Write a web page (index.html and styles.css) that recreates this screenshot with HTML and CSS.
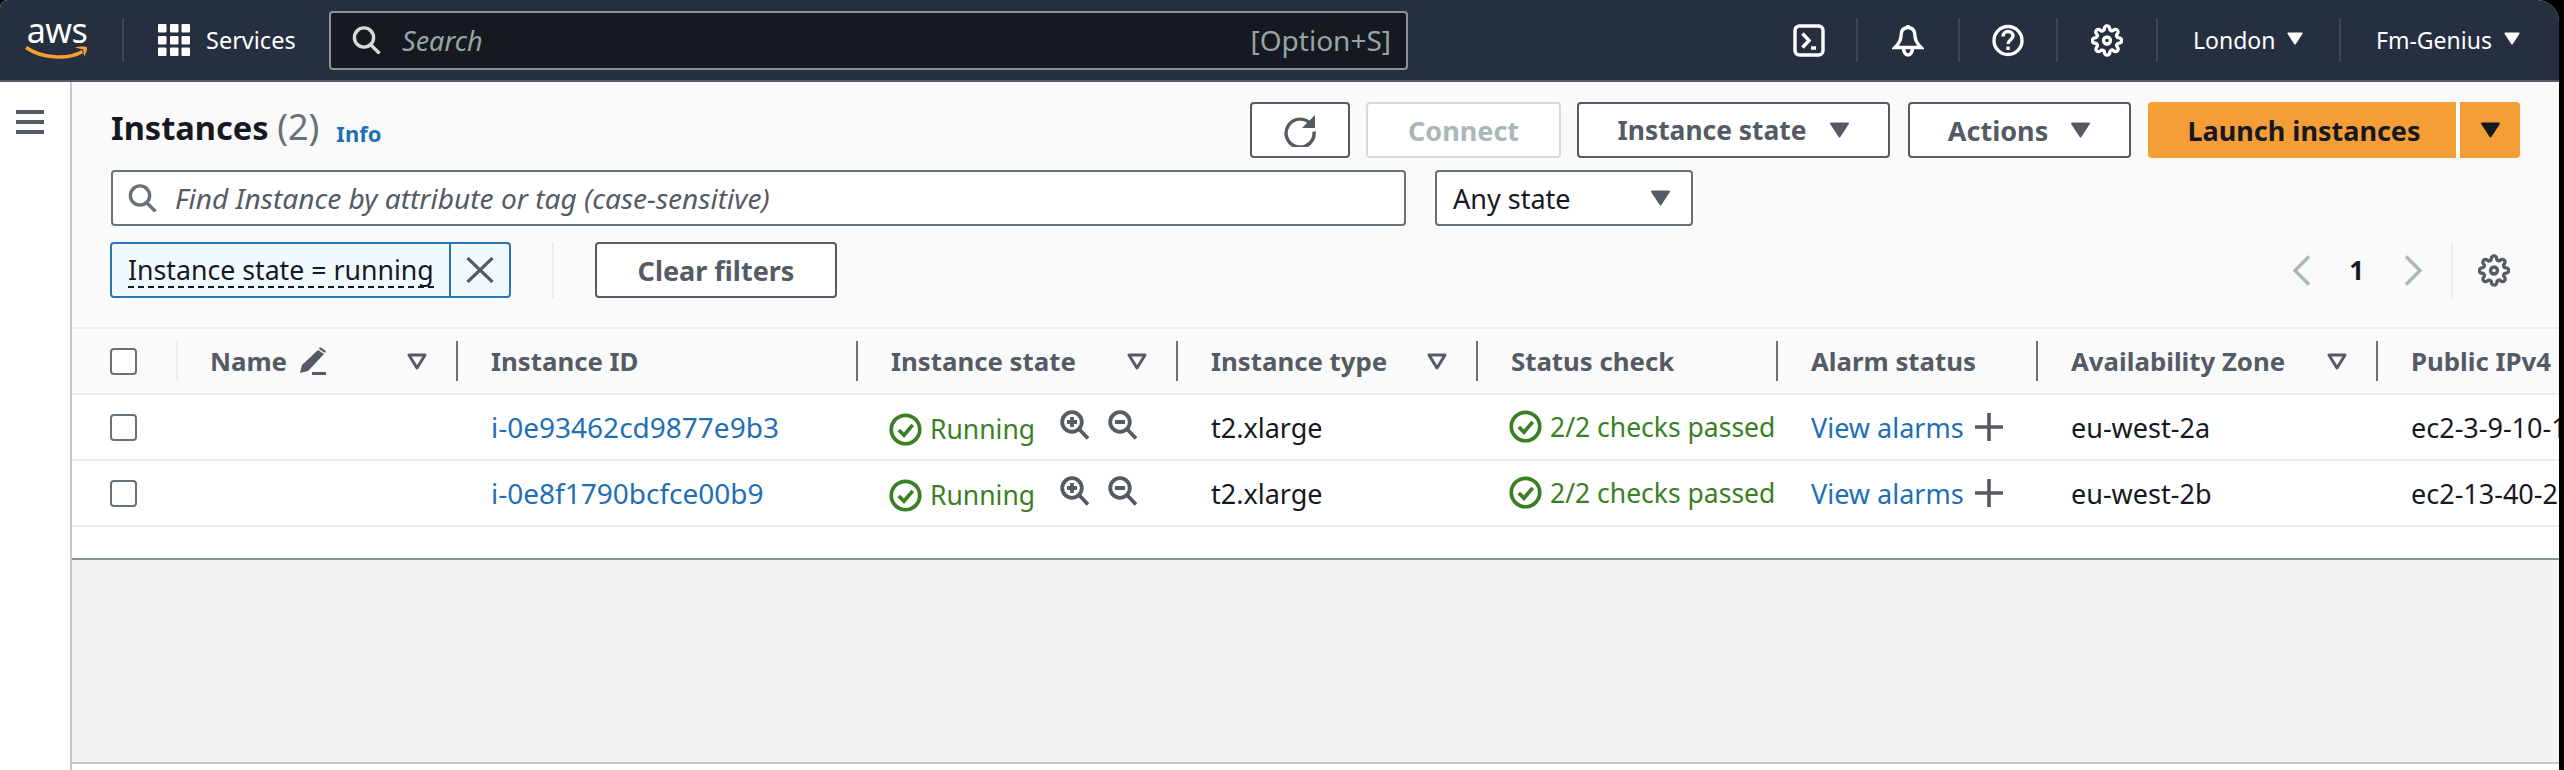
FILE: index.html
```html
<!DOCTYPE html>
<html lang="en">
<head>
<meta charset="utf-8">
<title>Instances | EC2</title>
<link rel="stylesheet" href="styles.css">
</head>
<body>
<svg class="defs" width="0" height="0" aria-hidden="true">
  <symbol id="i-gear" viewBox="0 0 24 24"><circle cx="12" cy="12" r="2.6"/><path d="M19.4 15a1.65 1.65 0 0 0 .33 1.82l.06.06a2 2 0 0 1 0 2.83 2 2 0 0 1-2.83 0l-.06-.06a1.65 1.65 0 0 0-1.82-.33 1.65 1.65 0 0 0-1 1.51V21a2 2 0 0 1-2 2 2 2 0 0 1-2-2v-.09A1.65 1.65 0 0 0 9 19.4a1.65 1.65 0 0 0-1.82.33l-.06.06a2 2 0 0 1-2.83 0 2 2 0 0 1 0-2.83l.06-.06a1.65 1.65 0 0 0 .33-1.82 1.65 1.65 0 0 0-1.51-1H3a2 2 0 0 1-2-2 2 2 0 0 1 2-2h.09A1.65 1.65 0 0 0 4.6 9a1.65 1.65 0 0 0-.33-1.82l-.06-.06a2 2 0 0 1 0-2.83 2 2 0 0 1 2.83 0l.06.06a1.65 1.65 0 0 0 1.82.33H9a1.65 1.65 0 0 0 1-1.51V3a2 2 0 0 1 2-2 2 2 0 0 1 2 2v.09a1.65 1.65 0 0 0 1 1.51 1.65 1.65 0 0 0 1.82-.33l.06-.06a2 2 0 0 1 2.83 0 2 2 0 0 1 0 2.83l-.06.06a1.65 1.65 0 0 0-.33 1.82V9a1.65 1.65 0 0 0 1.51 1H21a2 2 0 0 1 2 2 2 2 0 0 1-2 2h-.09a1.65 1.65 0 0 0-1.51 1z"/></symbol>
  <symbol id="i-caret" viewBox="0 0 20 16"><path d="M1.5 1.5h17L10 14.5z" fill="currentColor" stroke="currentColor" stroke-width="2" stroke-linejoin="round"/></symbol>
  <symbol id="i-funnel" viewBox="0 0 20 17"><path d="M2 2h16l-8 13z" fill="none" stroke="currentColor" stroke-width="3" stroke-linejoin="round"/></symbol>
  <symbol id="i-check" viewBox="0 0 32 32"><circle cx="16" cy="16" r="13.8" fill="none" stroke="currentColor" stroke-width="3.6"/><path d="M9.5 16.5l5 5 8.500-10" fill="none" stroke="currentColor" stroke-width="3.6"/></symbol>
  <symbol id="i-zoomin" viewBox="0 0 30 30"><circle cx="12" cy="12" r="9.8" fill="none" stroke="currentColor" stroke-width="3.8"/><path d="M19 19l9 9.5M12 7v10M7 12h10" fill="none" stroke="currentColor" stroke-width="3.8"/></symbol>
  <symbol id="i-zoomout" viewBox="0 0 30 30"><circle cx="12" cy="12" r="9.8" fill="none" stroke="currentColor" stroke-width="3.8"/><path d="M19 19l9 9.5M7 12h10" fill="none" stroke="currentColor" stroke-width="3.8"/></symbol>
  <symbol id="i-plus" viewBox="0 0 28 28"><path d="M14 0v28M0 14h28" fill="none" stroke="currentColor" stroke-width="3.6"/></symbol>
  <symbol id="i-search" viewBox="0 0 30 28"><circle cx="12" cy="11.5" r="9.6" fill="none" stroke="currentColor" stroke-width="3.4"/><path d="M18.5 18.5l9 9" fill="none" stroke="currentColor" stroke-width="3.4"/></symbol>
</svg>

<div class="window">
  <header class="topbar">
    <a class="logo">
      <span class="logo-word">aws</span>
      <svg class="logo-smile" width="64" height="15" viewBox="0 0 64 15"><path d="M1 2.500C16 13 42 15.500 57.500 6.500" fill="none" stroke="#f79f2f" stroke-width="3.600"/><path d="M50 2.500c4-1.200 10-1.500 11.800-.4 1 1.600-.8 6.500-2.600 9.300-.6-2.800-.6-5.300-1-7z" fill="#f79f2f"/></svg>
    </a>
    <span class="bar-divider"></span>
    <svg class="grid-icon" width="32" height="32" viewBox="0 0 32 32" fill="#fff"><rect x="0" y="0" width="8.500" height="8.500" rx="1"/><rect x="12" y="0" width="8.500" height="8.500" rx="1"/><rect x="23.500" y="0" width="8.500" height="8.500" rx="1"/><rect x="0" y="12" width="8.500" height="8.500" rx="1"/><rect x="12" y="12" width="8.500" height="8.500" rx="1"/><rect x="23.500" y="12" width="8.500" height="8.500" rx="1"/><rect x="0" y="23.500" width="8.500" height="8.500" rx="1"/><rect x="12" y="23.500" width="8.500" height="8.500" rx="1"/><rect x="23.500" y="23.500" width="8.500" height="8.500" rx="1"/></svg>
    <span class="services">Services</span>
    <div class="global-search">
      <svg class="global-search-icon" width="30" height="28"><use href="#i-search"/></svg>
      <span class="global-search-text">Search</span>
      <span class="global-search-key">[Option+S]</span>
    </div>
    <nav class="nav-right">
      <div class="nav-item nav-icon nav-shell">
        <svg width="32" height="33" viewBox="0 0 32 33" fill="none" stroke="#fff" stroke-width="3.400"><rect x="2" y="2" width="28" height="29" rx="4.500"/><path d="M9.500 9.500l6.500 7-6.500 7M18 24h5"/></svg>
      </div>
      <div class="nav-item nav-icon nav-bell">
        <svg width="32" height="33" viewBox="0 0 32 33" fill="none" stroke="#fff" stroke-width="3.400"><path d="M16 3.500c-5.500 0-7 4.500-7 8.500 0 5-2.500 8-6 11.500h26c-3.500-3.500-6-6.500-6-11.500 0-4-1.500-8.500-7-8.500zM16 1v3M11.500 24c0 4 2 7 4.500 7s4.500-3 4.500-7"/></svg>
      </div>
      <div class="nav-item nav-icon nav-help">
        <svg width="32" height="33" viewBox="0 0 32 33" fill="none" stroke="#fff" stroke-width="3.400"><circle cx="16" cy="16.500" r="14"/><path d="M11 12.500c0-3 2.200-5 5-5s5 2 5 4.500c0 3.500-5 4-5 8"/><path d="M16 22.500v3.500"/></svg>
      </div>
      <div class="nav-item nav-icon">
        <svg class="gear" width="32" height="33"><use href="#i-gear"/></svg>
      </div>
      <div class="nav-item nav-menu nav-region">London<svg class="nav-caret" width="16" height="13"><use href="#i-caret"/></svg></div>
      <div class="nav-item nav-menu nav-account">Fm-Genius<svg class="nav-caret" width="16" height="13"><use href="#i-caret"/></svg></div>
    </nav>
  </header>

  <div class="body-row">
    <aside class="sidebar">
      <span class="burger"></span>
      <span class="burger"></span>
      <span class="burger"></span>
    </aside>
    <main class="content">
      <section class="toolbar">
        <div class="tool-row">
          <h1 class="title">Instances <span class="count">(2)</span></h1>
          <a class="info">Info</a>
          <div class="actions">
            <button class="btn btn-refresh"><svg width="32" height="33" viewBox="0 0 32 33" fill="none"><path d="M27.500 10.500A14 14 0 1 0 30 17" stroke="#545b64" stroke-width="3.400" transform="translate(0 .5)"/><path d="M31 1v13H18z" fill="#545b64"/></svg></button>
            <button class="btn btn-connect" disabled>Connect</button>
            <button class="btn btn-state">Instance state<svg class="caret" width="21" height="16"><use href="#i-caret"/></svg></button>
            <button class="btn btn-actions">Actions<svg class="caret" width="21" height="16"><use href="#i-caret"/></svg></button>
            <div class="launch">
              <button class="btn-primary btn-launch">Launch instances</button>
              <button class="btn-primary btn-launch-more"><svg width="21" height="16"><use href="#i-caret"/></svg></button>
            </div>
          </div>
        </div>
        <div class="tool-row filter-row">
          <div class="find">
            <svg class="find-icon" width="30" height="28"><use href="#i-search"/></svg>
            <span class="find-text">Find Instance by attribute or tag (case-sensitive)</span>
          </div>
          <div class="select">Any state<svg class="caret" width="21" height="16"><use href="#i-caret"/></svg></div>
        </div>
        <div class="tool-row token-row">
          <div class="token">
            <span class="token-label"><span class="token-text">Instance state = running</span></span>
            <span class="token-close"><svg width="28" height="26" viewBox="0 0 28 26"><path d="M1.500 1l25 24M26.500 1l-25 24" fill="none" stroke="#545b64" stroke-width="3.200"/></svg></span>
          </div>
          <span class="soft-divider"></span>
          <button class="btn btn-clear">Clear filters</button>
          <div class="pager">
            <svg class="chev" width="19" height="31" viewBox="0 0 19 31"><path d="M17 1.500L3 15.500l14 14" fill="none" stroke="#aab7b8" stroke-width="3.400"/></svg>
            <span class="page-num">1</span>
            <svg class="chev" width="19" height="31" viewBox="0 0 19 31"><path d="M2 1.500l14 14-14 14" fill="none" stroke="#aab7b8" stroke-width="3.400"/></svg>
            <span class="soft-divider pager-divider"></span>
            <svg class="gear gear-dark" width="32" height="33"><use href="#i-gear"/></svg>
          </div>
        </div>
      </section>

      <div class="table-wrap">
        <table class="instances">
          <colgroup>
            <col class="c-check"><col class="c-name"><col class="c-id"><col class="c-state"><col class="c-type"><col class="c-status"><col class="c-alarm"><col class="c-az"><col class="c-ip">
          </colgroup>
          <thead>
            <tr>
              <th class="th-check"><span class="check-cell"><span class="checkbox"></span></span></th>
              <th><div class="th-inner th-soft"><span class="th-label">Name</span><svg class="pencil" width="30" height="28" viewBox="0 0 30 28" fill="#545b64"><path d="M21 3l6 4L11 24l-8 2 2-8z"/><path d="M23 0l6 4-1 2-6-4zM15 25h14v3H15z"/></svg><svg class="funnel" width="20" height="17"><use href="#i-funnel"/></svg></div></th>
              <th><div class="th-inner"><span class="th-label">Instance ID</span></div></th>
              <th><div class="th-inner"><span class="th-label">Instance state</span><svg class="funnel" width="20" height="17"><use href="#i-funnel"/></svg></div></th>
              <th><div class="th-inner"><span class="th-label">Instance type</span><svg class="funnel" width="20" height="17"><use href="#i-funnel"/></svg></div></th>
              <th><div class="th-inner"><span class="th-label">Status check</span></div></th>
              <th><div class="th-inner"><span class="th-label">Alarm status</span></div></th>
              <th><div class="th-inner"><span class="th-label">Availability Zone</span><svg class="funnel" width="20" height="17"><use href="#i-funnel"/></svg></div></th>
              <th><div class="th-inner"><span class="th-label">Public IPv4 DNS</span></div></th>
            </tr>
          </thead>
          <tbody>
            <tr>
              <td><span class="check-cell"><span class="checkbox"></span></span></td>
              <td></td>
              <td class="pad"><a class="link link-id">i-0e93462cd9877e9b3</a></td>
              <td class="pad"><div class="state"><svg class="ok ok-state" width="33" height="33"><use href="#i-check"/></svg><span class="green state-text">Running</span><svg class="mag" width="30" height="30"><use href="#i-zoomin"/></svg><svg class="mag" width="30" height="30"><use href="#i-zoomout"/></svg></div></td>
              <td class="pad">t2.xlarge</td>
              <td class="pad"><div class="status"><svg class="ok" width="33" height="33"><use href="#i-check"/></svg><span class="green status-text">2/2 checks passed</span></div></td>
              <td class="pad"><div class="alarm"><a class="link">View alarms</a><svg class="plus" width="28" height="28"><use href="#i-plus"/></svg></div></td>
              <td class="pad">eu-west-2a</td>
              <td class="pad">ec2-3-9-10-123.eu-west-2.compute.amazonaws.com</td>
            </tr>
            <tr>
              <td><span class="check-cell"><span class="checkbox"></span></span></td>
              <td></td>
              <td class="pad"><a class="link link-id">i-0e8f1790bcfce00b9</a></td>
              <td class="pad"><div class="state"><svg class="ok ok-state" width="33" height="33"><use href="#i-check"/></svg><span class="green state-text">Running</span><svg class="mag" width="30" height="30"><use href="#i-zoomin"/></svg><svg class="mag" width="30" height="30"><use href="#i-zoomout"/></svg></div></td>
              <td class="pad">t2.xlarge</td>
              <td class="pad"><div class="status"><svg class="ok" width="33" height="33"><use href="#i-check"/></svg><span class="green status-text">2/2 checks passed</span></div></td>
              <td class="pad"><div class="alarm"><a class="link">View alarms</a><svg class="plus" width="28" height="28"><use href="#i-plus"/></svg></div></td>
              <td class="pad">eu-west-2b</td>
              <td class="pad">ec2-13-40-210-77.eu-west-2.compute.amazonaws.com</td>
            </tr>
          </tbody>
        </table>
      </div>
      <div class="table-rest"></div>
      <div class="split-panel"></div>
      <div class="foot"></div>
    </main>
  </div>
</div>
</body>
</html>
```
FILE: styles.css
```css
* { box-sizing: border-box; }
html, body { margin: 0; height: 770px; overflow: hidden; background: #000; }
body { font-family: "Noto Sans", "Open Sans", sans-serif; font-size: 27px; color: #16191f; }
.defs { position: absolute; }
svg { display: block; flex: none; }

.window { width: 2559px; height: 770px; background: #fff; border-radius: 8px 22px 0 0; overflow: hidden; display: flex; flex-direction: column; }

/* top bar */
.topbar { height: 82px; flex: none; background: #252f3f; border-bottom: 2px solid #545b64; display: flex; align-items: center; color: #fff; }
.logo { margin-left: 25px; width: 64px; display: flex; flex-direction: column; align-items: center; height: 44px; margin-top: -5px; }
.logo-word { font-size: 34px; line-height: 28px; height: 27px; letter-spacing: -.5px; }
.logo-smile { margin-top: 2px; }
.bar-divider { width: 2px; height: 44px; background: #414750; margin-left: 33px; }
.grid-icon { margin-left: 34px; }
.services { margin-left: 16px; font-size: 23.500px; width: 89px; flex: none; white-space: nowrap; }
.global-search { margin-left: 34px; width: 1079px; height: 59px; flex: none; background: #16191f; border: 2px solid #879596; border-radius: 4px; display: flex; align-items: center; padding: 0 15px 0 21px; }
.global-search-icon { color: #d5dbdb; }
.global-search-text { margin-left: 20px; font-style: italic; color: #95a5a6; font-size: 27px; }
.global-search-key { margin-left: auto; color: #95a5a6; font-size: 28px; }
.nav-right { margin-left: auto; display: flex; align-items: center; }
.nav-item { height: 44px; display: flex; align-items: center; border-right: 2px solid #414750; font-size: 23px; }
.nav-icon { width: 100px; justify-content: center; }
.nav-shell { width: 97px; }
.nav-bell { width: 102px; }
.nav-help { width: 98px; }
.gear { color: #fff; fill: none; stroke: currentColor; stroke-width: 2.500; }
.nav-menu { padding-left: 35px; }
.nav-region { width: 183px; }
.nav-account { width: 218px; border-right: 0; }
.nav-caret { margin-left: 12px; color: #fff; margin-top: -3px; }

/* body */
.body-row { flex: 1; display: flex; min-height: 0; }
.sidebar { width: 70px; flex: none; padding: 28px 0 0 16px; display: flex; flex-direction: column; gap: 6px; }
.burger { width: 28px; height: 4px; background: #545b64; }
.content { flex: 1; min-width: 0; border-left: 2px solid #c4c9cc; display: flex; flex-direction: column; }

.toolbar { background: #fafafa; padding: 20px 39px 29px 39px; height: 245px; flex: none; }
.tool-row { display: flex; align-items: center; height: 56px; }
.filter-row { margin-top: 12px; }
.token-row { margin-top: 16px; margin-left: -1px; }
.title { margin: -4px 0 0; font-size: 32.600px; font-weight: 700; line-height: 44px; white-space: nowrap; }
.count { font-weight: 400; color: #687078; font-size: 36px; line-height: 40px; }
.info { margin-left: 17px; margin-top: 6px; color: #1f6fb5; font-weight: 700; font-size: 22px; }
.actions { margin-left: auto; display: flex; align-items: center; gap: 16px; }

.btn { height: 56px; border: 2px solid #545b64; border-radius: 4px; background: #fff; color: #545b64; font: 700 27px "Noto Sans", sans-serif; display: flex; align-items: center; justify-content: center; padding: 0; }
.btn-refresh { width: 100px; }
.btn-connect { width: 195px; border-color: #d5dbdb; color: #aab7b8; }
.btn-state { width: 313px; font-size: 26.400px; }
.btn-actions { width: 223px; margin-left: 2px; }
.btn-clear { width: 242px; margin-left: 41px; }
.caret { margin-left: 22px; color: #545b64; }
.launch { display: flex; gap: 4px; margin-left: 1px; }
.btn-primary { height: 56px; border: 0; background: #f59e38; color: #16191f; font: 700 27px "Noto Sans", sans-serif; display: flex; align-items: center; justify-content: center; padding: 0; }
.btn-launch { width: 308px; border-radius: 4px 0 0 4px; padding-left: 4px; }
.btn-launch-more { width: 60px; border-radius: 0 4px 4px 0; }

.find { width: 1295px; height: 56px; background: #fff; border: 2px solid #687078; border-radius: 4px; display: flex; align-items: center; padding-left: 15px; }
.find-icon { color: #687078; }
.find-text { margin-left: 17px; font-style: italic; color: #545b64; font-size: 28.100px; white-space: nowrap; }
.select { margin-left: 29px; width: 258px; height: 56px; background: #fff; border: 2px solid #687078; border-radius: 4px; display: flex; align-items: center; justify-content: space-between; padding: 0 20px 0 16px; }

.token { width: 401px; height: 56px; background: #f1faff; border: 2px solid #2a74b8; border-radius: 4px; display: flex; align-items: stretch; }
.token-label { flex: 1; border-right: 2px solid #2a74b8; display: flex; align-items: center; padding-left: 16px; }
.token-text { border-bottom: 2px dashed #16191f; line-height: 32px; font-size: 26.700px; white-space: nowrap; margin-top: 2px; }
.token-close { width: 58px; display: flex; align-items: center; justify-content: center; }
.soft-divider { width: 2px; height: 56px; background: #eaeded; margin-left: 41px; flex: none; }
.pager { margin-left: auto; display: flex; align-items: center; }
.page-num { margin: 0 40px 0 38px; font-weight: 700; font-size: 26px; }
.pager-divider { margin-left: 28px; }
.gear-dark { color: #545b64; margin: 0 10px 0 25px; }

/* table */
.table-wrap { flex: none; overflow: hidden; background: #fff; }
.instances { width: 2600px; table-layout: fixed; border-collapse: separate; border-spacing: 0; }
.c-check { width: 104px; } .c-name { width: 280px; } .c-id { width: 400px; } .c-state { width: 320px; } .c-type { width: 300px; } .c-status { width: 300px; } .c-alarm { width: 260px; } .c-az { width: 340px; } .c-ip { width: 296px; }
th { height: 68px; padding: 0; background: #fafafa; border-top: 2px solid #eaeded; border-bottom: 2px solid #eaeded; text-align: left; font-weight: 700; color: #545b64; }
.th-inner { height: 40px; border-left: 2px solid #687078; padding: 0 29px 0 33px; display: flex; align-items: center; white-space: nowrap; }
.th-soft { border-left-color: #eaeded; padding-left: 32px; }
.th-label { font-size: 25.800px; }
.pencil { margin-left: 10px; }
.funnel { margin-left: auto; color: #545b64; }
td { height: 66px; padding: 0; border-bottom: 2px solid #eaeded; white-space: nowrap; overflow: hidden; font-size: 27px; }
td.pad { padding-left: 35px; }
.check-cell { display: flex; padding-left: 38px; }
.checkbox { width: 27px; height: 27px; background: #fff; border: 2px solid #687078; border-radius: 4px; }
.link { color: #1f6fb5; }
.link-id { font-size: 28px; }
.green { color: #3b7f24; }
.state, .status, .alarm { display: flex; align-items: center; }
.ok { color: #3b7f24; margin: -1px 8px 0 -2px; }
.ok-state { margin-top: 4px; }
.state-text { margin-top: 3px; margin-right: 7px; font-size: 26.500px; }
.status-text { font-size: 26.500px; }
.mag { color: #545b64; margin-top: -5px; margin-left: 18px; }
.plus { color: #545b64; margin-left: 11px; }

.table-rest { height: 31px; flex: none; background: #fff; }
.split-panel { height: 206px; flex: none; background: #f2f3f3; border-top: 2px solid #879596; border-bottom: 2px solid #c4c9cc; }
.foot { flex: 1; background: #fff; }
```
